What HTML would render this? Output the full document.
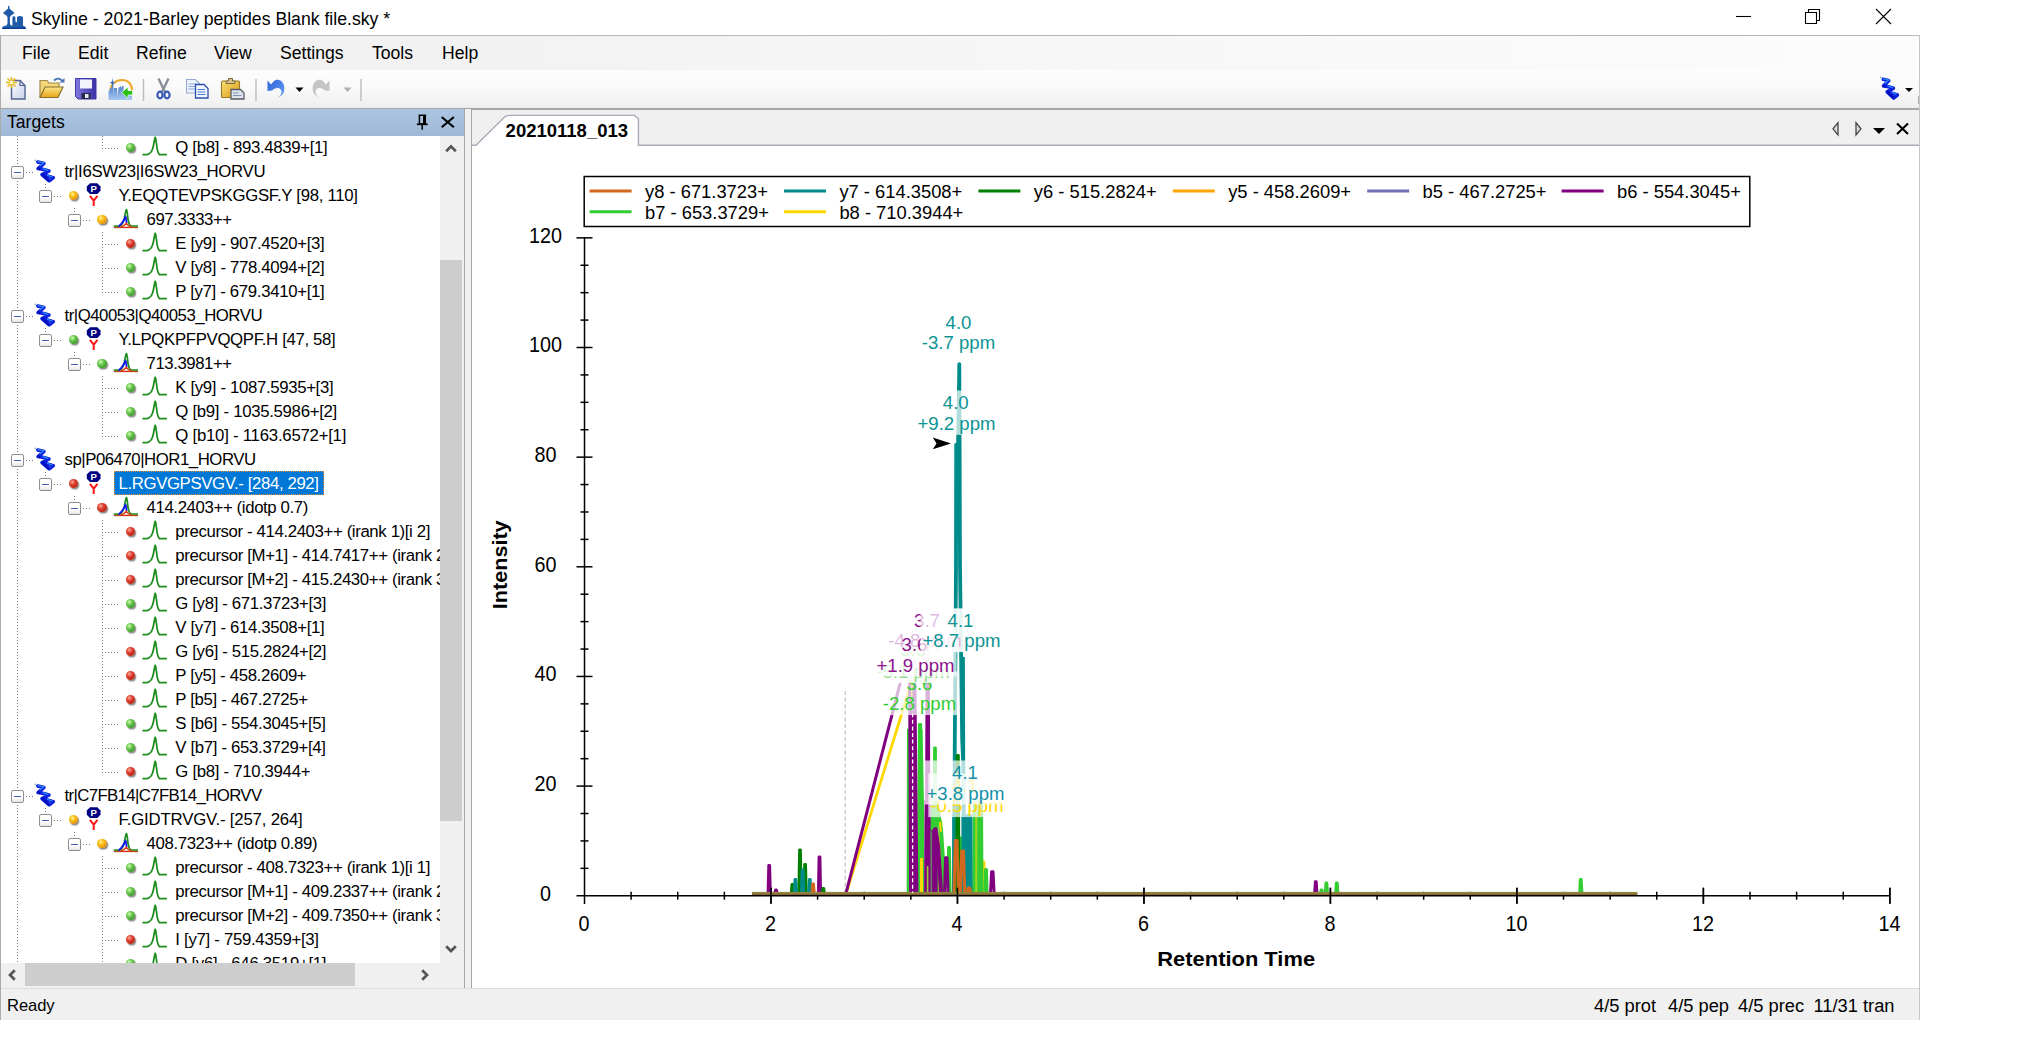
<!DOCTYPE html>
<html><head><meta charset="utf-8"><title>Skyline</title>
<style>
html,body{margin:0;padding:0;background:#fff;}
body{width:2024px;height:1064px;overflow:hidden;position:relative;font-family:"Liberation Sans",sans-serif;color:#000;}
.abs,#win *{position:absolute;}
#win{position:absolute;left:0;top:0;width:1920px;height:1020px;overflow:hidden;}
#title{left:0;top:0;width:1920px;height:35px;background:#fff;}
#title .t{left:31px;top:8px;font-size:17.66px;line-height:22px;white-space:nowrap;}
#topline{left:0;top:35px;width:1920px;height:1px;background:#b9b9b9;}
#lb{left:0;top:35px;width:1px;height:985px;background:#ababab;}
#rb{left:1919px;top:35px;width:1px;height:985px;background:#c6c6c6;}
#menu{left:1px;top:36px;width:1918px;height:34px;background:linear-gradient(90deg,#f0f0f0 0%,#f2f2f2 25%,#f7f7f7 58%,#fcfcfc 100%);}
#menu span{top:6px;font-size:17.6px;line-height:22px;white-space:nowrap;}
#tb{left:1px;top:70px;width:1918px;height:38px;background:linear-gradient(180deg,#fdfdfd 0%,#f9f9f9 50%,#eeeeee 100%);}
#tbline{left:1px;top:108.3px;width:1918px;height:1.4px;background:#a4a4a4;}
#dock{left:1px;top:109px;width:1918px;height:880px;background:#f0f0f0;}
/* targets pane */
#th{left:1px;top:109px;width:463px;height:26.7px;z-index:2;background:linear-gradient(180deg,#abc5e3,#9eb8d6);}
#th .t{left:6px;top:2px;font-size:17.6px;line-height:22px;}
#tree{left:1px;top:135px;width:439px;height:828px;background:#fff;overflow:hidden;}
#tree .tx{font-size:16.8px;line-height:20px;white-space:nowrap;padding:0 2px;letter-spacing:-0.3px}
#tree .tx.sel{background:#0078d7;color:#fff;outline:1px dotted #e08a3a;outline-offset:-1px;line-height:26px;height:24px;padding:0 5px 0 4.6px;}
.hd{height:1.3px;background-image:linear-gradient(90deg,#7c7c7c 0,#7c7c7c 1.25px,transparent 1.25px);background-size:3px 2px;}
.vd{width:1.25px;background-image:linear-gradient(180deg,#7c7c7c 0,#7c7c7c 1.25px,transparent 1.25px);background-size:2px 3px;}
.bx{width:10.6px;height:10.6px;border:1.2px solid #8f8f8f;background:linear-gradient(180deg,#fff 0%,#fff 55%,#e6e6e6 100%);border-radius:2px;}
.bx:after{content:"";position:absolute;left:1.6px;top:4.6px;width:7.4px;height:1.3px;background:#4660b0;}
.dot{width:9.8px;height:9.6px;border-radius:50%;box-shadow:1.2px 1.5px 1.3px rgba(40,30,20,.55);}
.dot.g{background:radial-gradient(circle at 37% 33%,#d8f9c0 0%,#74d058 30%,#44ac30 60%,#237e1a 88%,#1a6a14 100%);}
.dot.r{background:radial-gradient(circle at 37% 33%,#f8b0a0 0%,#e04434 32%,#c82a1a 62%,#96180c 88%,#7c1006 100%);}
.dot.o{background:radial-gradient(circle at 38% 34%,#fff4a8 0%,#fdc620 28%,#f2a40c 56%,#bc7606 86%,#9c5c04 100%);}
#vs{left:440px;top:135px;width:24px;height:828px;background:#f0f0f0;}
#vs .th{left:0;top:125px;width:22px;height:561px;background:#cdcdcd;}
#hs{left:1px;top:963px;width:439px;height:24px;background:#f0f0f0;}
#hs .th{left:24px;top:0;width:330px;height:23px;background:#cdcdcd;}
#corner{left:440px;top:963px;width:24px;height:24px;background:#f0f0f0;}
#split1{left:463.6px;top:109px;width:1.6px;height:879px;background:#a6a6a6;}
/* document pane */
#doc{left:471px;top:109px;width:1448px;height:879px;background:#fff;border-left:1.5px solid #a6a6a6;border-top:1.2px solid #a8a8a8;box-sizing:border-box;}
#tabs{left:472px;top:110px;width:1447px;height:35px;background:#f0f0f0;}
#tabline{display:none}
#botline{left:1px;top:988px;width:1918px;height:1px;background:#dcdcdc;}
#status{left:1px;top:989px;width:1918px;height:31px;background:#f0f0f0;}
#status span{top:6px;font-size:17.6px;line-height:22px;white-space:nowrap;}
svg.ic{overflow:visible}
</style></head><body>
<svg width="0" height="0" style="position:absolute">
<defs>
<g id="itran"><path d="M0.5 19.6 H5 C7 19.4 8 18 9 17 C10.5 15.5 11.5 11 12.2 6.5 C12.6 4 13 2.2 13.3 2.2 C13.7 2.2 14 5 14.5 9 C15 13 15.3 17.5 17.5 19.6 H24.8" fill="none" stroke="#1c8c1c" stroke-width="1.7" stroke-linejoin="round"/></g>
<g id="iprec"><path d="M0.8 20.4 H25" stroke="#c83c14" stroke-width="1.5"/><path d="M0.8 19 H6 C8 19 10 16 11 13 C11.8 10 12.6 2.4 13.4 2.4 C14.2 2.4 14.4 8 15 12 C15.6 16 16.5 19 18.5 19 H25" fill="none" stroke="#1c8c1c" stroke-width="1.7"/><path d="M5.5 19.6 C8 17.5 10 15 11.2 12.5 C11.8 11 12.3 9.5 12.6 9.5 C13 9.5 13.2 13 13.6 16" fill="none" stroke="#1818f0" stroke-width="1.8"/><path d="M7.5 20 C10 19.5 12 18 13.4 16.3 C14.6 18 16 19.5 18.5 20" fill="none" stroke="#e03c14" stroke-width="1.4"/></g>
<g id="ipep"><path d="M5 0.2 H12.3 L15.5 3.4 V7.8 L12.3 11 H5 L1.8 7.8 V3.4 Z" fill="#000082"/><text x="8.7" y="9.3" font-family="Liberation Sans,sans-serif" font-size="9.6" font-weight="bold" fill="#fff" text-anchor="middle">P</text><path d="M4.9 12.8 L8.7 17.6 L12.5 12.8 M8.7 17.4 V23" fill="none" stroke="#ff1414" stroke-width="2"/></g>
<g id="iprot"><circle cx="1.2" cy="1.2" r=".7" fill="#4a9aa8"/><path d="M3.8 3 L10 4.400 L4 9.600 L8.500 10.200 L15 12 L8 15.600 L13.200 16.800 L19.300 18.700 L15.200 21.800 L8 15.600" fill="none" stroke="#0a1ee0" stroke-width="3.500" stroke-linejoin="round" stroke-linecap="round"/><path d="M4.200 2.600 L9.600 3.800 L6 6.800 M9 9.900 L14 11.300 M13.500 16.400 L18 17.800" fill="none" stroke="#2a86f8" stroke-width="1.400" stroke-linecap="round"/><path d="M4.400 8.800 L5.500 10.500 M8.500 14.800 L10.500 17.500 L15 21.500" fill="none" stroke="#0008a0" stroke-width="1.300" stroke-linecap="round"/></g>
</defs></svg>
<div id="win">
<div id="title"><svg style="left:0;top:0" width="30" height="34" viewBox="0 0 30 34"><g fill="#1f5ba8"><path d="M8 6.200 Q8.700 5.500 9.400 6.200 V8.600 L14.200 12.800 Q14.400 13.900 13.200 13.900 Q10.400 15 9.900 17.200 V23.500 Q10.200 25.600 12.200 26 H5.200 Q7.300 25.600 7.500 23.500 V17.200 Q7 15 4.200 13.900 Q3 13.900 3.200 12.800 L8 8.600 Z"/><path d="M12.400 26.500 V17.600 Q12.400 16.300 13.900 16.300 Q15.400 16.300 15.400 17.600 V21.500 L16.300 22.600 L17 21.500 V17.600 Q17 16 20 16 Q23 16 23 17.600 V26.500 Z"/><path d="M2 28.900 Q2 26.300 4.600 25.700 H23.400 Q26 26.300 26 28.900 Z"/></g><path d="M2.200 28.300 H25.800" stroke="#0a3c90" stroke-width="1.200"/></svg><span class="t">Skyline - 2021-Barley peptides Blank file.sky *</span>
<svg style="left:1730px;top:4px" width="170" height="26" viewBox="0 0 170 26" fill="none" stroke="#000" stroke-width="1.1"><path d="M6 12.5 H21"/><path d="M75.5 8.5 h11 v11 h-11 z M78.5 8.5 v-3 h11 v11 h-3"/><path d="M146 5 l15 15 M161 5 l-15 15"/></svg>
</div>
<div id="topline"></div>
<div id="menu"><span style="left:21px">File</span><span style="left:77px">Edit</span><span style="left:135px">Refine</span><span style="left:213px">View</span><span style="left:279px">Settings</span><span style="left:371px">Tools</span><span style="left:441px">Help</span></div>
<div id="tb"><svg style="left:0;top:0" width="1918" height="38" viewBox="1 70 1918 38">
<defs>
<linearGradient id="gpg" x1="0" y1="0" x2="1" y2="1"><stop offset="0" stop-color="#ffffff"/><stop offset="1" stop-color="#c8d0e8"/></linearGradient>
<linearGradient id="gfo" x1="0" y1="0" x2="0" y2="1"><stop offset="0" stop-color="#fbe58a"/><stop offset="1" stop-color="#e9a416"/></linearGradient>
<linearGradient id="gfl" x1="0" y1="0" x2="1" y2="0"><stop offset="0" stop-color="#8078e0"/><stop offset="1" stop-color="#3a30a4"/></linearGradient>
<linearGradient id="gsk" x1="0" y1="0" x2="0" y2="1"><stop offset="0" stop-color="#1c56b0"/><stop offset="1" stop-color="#a8c8f4"/></linearGradient>
<linearGradient id="gcb" x1="0" y1="0" x2="1" y2="1"><stop offset="0" stop-color="#fbe07a"/><stop offset="1" stop-color="#d89a10"/></linearGradient>
<linearGradient id="gun" x1="0" y1="0" x2="1" y2="1"><stop offset="0" stop-color="#2a60d8"/><stop offset="1" stop-color="#6aa0f4"/></linearGradient>
</defs>
<!-- new -->
<path d="M11.5 80.5 H20 L25 85.5 V99 H11.5 Z" fill="url(#gpg)" stroke="#52648e" stroke-width="1.4"/>
<path d="M20 80.5 V85.5 H25" fill="none" stroke="#52648e" stroke-width="1.2"/>
<g stroke="#e8b818" stroke-width="1.6"><path d="M6 82.5 H17 M11.5 77 V88 M7.5 78.5 L15.5 86.5 M15.5 78.5 L7.5 86.5"/></g>
<rect x="9.8" y="80.8" width="3.4" height="3.4" fill="#fff8c0"/>
<!-- open -->
<path d="M40 97.5 V80.5 H47 L49 83 H59 V87" fill="#f4d878" stroke="#a08a50" stroke-width="1.2"/>
<path d="M40 97.5 L45 87 H63 L58 97.5 Z" fill="url(#gfo)" stroke="#8a7030" stroke-width="1.2"/>
<path d="M54 80.5 C57 77.5 61 78 62.5 82" fill="none" stroke="#4a74b4" stroke-width="1.8"/><path d="M59.5 82.5 H64.5 V78 Z" fill="#4a74b4"/>
<!-- save -->
<path d="M75.5 78.5 H96 V99 H78 L75.5 96.5 Z" fill="url(#gfl)" stroke="#4038a8" stroke-width="1"/>
<rect x="80" y="79.5" width="12" height="9" fill="#f4f4fc"/><rect x="81.5" y="93" width="9" height="6" fill="#2a2a48"/><rect x="85" y="94" width="3.5" height="4" fill="#e8e8f4"/>
<!-- skyline import -->
<path d="M110 93 C110 84 116 80 122 80 C128 80 132 84 132 90" fill="none" stroke="#f0a828" stroke-width="2"/>
<path d="M108.5 100 V92 L110.5 88 H111.5 L112 84 L110 82.5 L112 81.5 L112.5 78 L113 81.5 L115 82.5 L113.2 84 L114 96 V88 H117 V96 L118.5 88 L121 86 L122 89 V86 H123.5 V92 L132 96 V100 Z" fill="url(#gsk)"/>
<path d="M121.5 92.5 L128 87 V90.5 H132.5 V95 H128 V98.5 Z" fill="#28c010" stroke="#e8ffe0" stroke-width=".8"/>
<!-- sep -->
<path d="M143.5 79 V101 M256 79 V101 M361 79 V101" stroke="#bcbcbc" stroke-width="1.4"/>
<!-- cut -->
<path d="M158.5 78.5 L165 92 M168.5 78.5 L162 92" stroke="#8a8e98" stroke-width="2.4" fill="none"/>
<ellipse cx="160" cy="95" rx="2.6" ry="3.4" fill="none" stroke="#3858b8" stroke-width="2.2"/><ellipse cx="167" cy="95" rx="2.6" ry="3.4" fill="none" stroke="#3858b8" stroke-width="2.2"/>
<!-- copy -->
<path d="M186.5 79.5 H195.5 L199.5 83.5 V93 H186.5 Z" fill="#eef2fc" stroke="#98a8d0" stroke-width="1.1"/>
<path d="M188.5 84 H196 M188.5 86.5 H196 M188.5 89 H196" stroke="#88a4e0" stroke-width="1"/>
<path d="M195.5 84.5 H204 L208 88.5 V98 H195.5 Z" fill="#f4f8ff" stroke="#2c4cac" stroke-width="1.3"/>
<path d="M197.5 89.5 H205 M197.5 92 H205.5 M197.5 94.5 H205.5" stroke="#4878d8" stroke-width="1.1"/>
<!-- paste -->
<rect x="221.500" y="81" width="18" height="16.500" rx="1" fill="url(#gcb)" stroke="#9a7a28" stroke-width="1.1"/>
<path d="M226 83.500 V81 H228.500 V78.500 H232.500 V81 H235 V83.500 Z" fill="#d8c488" stroke="#7a6a40" stroke-width="1"/>
<path d="M231 89.500 H240.500 L244 93 V99 H231 Z" fill="#dde4f0" stroke="#5a5a60" stroke-width="1.3"/>
<path d="M233 93 H238.500 M233 95.500 H241.500" stroke="#8090a8" stroke-width="1"/>
<!-- undo -->
<path d="M272 90.500 C277 86 282 88 281.500 92.500 C281 95.500 279 97 277.500 97.500 C282.500 96.500 285.500 91.500 284 85.500 C282.500 80 277 78 273.500 81.500 L271 84.500 L267.500 80.500 V91 Z" fill="url(#gun)"/>
<path d="M295.500 87.500 H303.500 L299.500 92 Z" fill="#000"/>
<!-- redo -->
<path d="M325 90.500 C320 86 315 88 315.500 92.500 C316 95.500 318 97 319.500 97.500 C314.500 96.500 311.500 91.500 313 85.500 C314.500 80 320 78 323.500 81.500 L326 84.500 L329.500 80.500 V91 Z" fill="#c4c4c4"/>
<path d="M343.500 87.500 H351.500 L347.500 92 Z" fill="#b0b0b0"/>
<!-- right icon -->
<g transform="translate(1879.6,76.3) scale(0.93,1)"><use href="#iprot"/></g>
<path d="M1905 88 H1913 L1909 92 Z" fill="#000"/>
<path d="M1918.500 96 V104" stroke="#b0b0b0" stroke-width="1"/>
</svg>
</div>
<div id="tbline"></div>
<div id="dock"></div>
<div id="th"><span class="t">Targets</span>
<svg style="left:412px;top:4px" width="48" height="18" viewBox="0 0 48 18" fill="none" stroke="#000"><path d="M6.400 2.300 h5.900 v8.600 h-5.900 z" stroke-width="1.500"/><path d="M11.300 2.300 v8.600" stroke-width="2.600"/><path d="M3.800 11.300 h10.900" stroke-width="1.700"/><path d="M9.200 11.300 v5.400" stroke-width="1.500"/><path d="M28.700 4 l12.200 10.200 M40.900 4 l-12.200 10.200" stroke-width="2.100"/></svg></div>
<div id="tree">
<i class="vd" style="left:44.1px;top:48px;height:7px;background-position:0 1px"></i>
<i class="vd" style="left:72.7px;top:72px;height:7px;background-position:0 1px"></i>
<i class="vd" style="left:101.2px;top:96px;height:62px;background-position:0 1px"></i>
<i class="vd" style="left:44.1px;top:192px;height:7px;background-position:0 1px"></i>
<i class="vd" style="left:72.7px;top:216px;height:7px;background-position:0 1px"></i>
<i class="vd" style="left:101.2px;top:240px;height:62px;background-position:0 1px"></i>
<i class="vd" style="left:44.1px;top:336px;height:7px;background-position:0 1px"></i>
<i class="vd" style="left:72.7px;top:360px;height:7px;background-position:0 1px"></i>
<i class="vd" style="left:101.2px;top:384px;height:254px;background-position:0 1px"></i>
<i class="vd" style="left:44.1px;top:672px;height:7px;background-position:0 1px"></i>
<i class="vd" style="left:72.7px;top:696px;height:7px;background-position:0 1px"></i>
<i class="vd" style="left:101.2px;top:720px;height:120px;background-position:0 1px"></i>
<i class="vd" style="left:16.0px;top:0px;height:840px;background-position:0 1px"></i>
<i class="vd" style="left:101.2px;top:0px;height:14px;background-position:0 1px"></i>
<i class="hd" style="left:104px;top:12.8px;width:14px"></i><i class="dot g" style="left:124.7px;top:7.8px"></i><svg class="ic" style="left:141px;top:0px" width="26" height="24" viewBox="0 0 26 24"><use href="#itran"/></svg><span class="tx" style="left:172.3px;top:3px;letter-spacing:-0.33px">Q [b8] - 893.4839+[1]</span>
<i class="hd" style="left:25px;top:36.8px;width:8px"></i><i class="bx" style="left:10px;top:31px"></i><svg class="ic" style="left:33px;top:24px" width="22" height="24" viewBox="0 0 22 24"><use href="#iprot"/></svg><span class="tx" style="left:61.5px;top:27px;letter-spacing:-0.33px">tr|I6SW23|I6SW23_HORVU</span>
<i class="hd" style="left:53px;top:60.8px;width:8px"></i><i class="bx" style="left:38px;top:55px"></i><i class="dot o" style="left:67.6px;top:55.8px"></i><svg class="ic" style="left:84px;top:48px" width="20" height="24" viewBox="0 0 20 24"><use href="#ipep"/></svg><span class="tx" style="left:115.5px;top:51px;letter-spacing:-0.297px">Y.EQQTEVPSKGGSF.Y [98, 110]</span>
<i class="hd" style="left:82px;top:84.8px;width:8px"></i><i class="bx" style="left:67px;top:79px"></i><i class="dot o" style="left:96.2px;top:79.8px"></i><svg class="ic" style="left:112px;top:72px" width="26" height="24" viewBox="0 0 26 24"><use href="#iprec"/></svg><span class="tx" style="left:143.5px;top:75px;letter-spacing:-0.442px">697.3333++</span>
<i class="hd" style="left:104px;top:108.8px;width:14px"></i><i class="dot r" style="left:124.7px;top:103.8px"></i><svg class="ic" style="left:141px;top:96px" width="26" height="24" viewBox="0 0 26 24"><use href="#itran"/></svg><span class="tx" style="left:172.3px;top:99px;letter-spacing:-0.345px">E [y9] - 907.4520+[3]</span>
<i class="hd" style="left:104px;top:132.8px;width:14px"></i><i class="dot g" style="left:124.7px;top:127.8px"></i><svg class="ic" style="left:141px;top:120px" width="26" height="24" viewBox="0 0 26 24"><use href="#itran"/></svg><span class="tx" style="left:172.3px;top:123px;letter-spacing:-0.345px">V [y8] - 778.4094+[2]</span>
<i class="hd" style="left:104px;top:156.8px;width:14px"></i><i class="dot g" style="left:124.7px;top:151.8px"></i><svg class="ic" style="left:141px;top:144px" width="26" height="24" viewBox="0 0 26 24"><use href="#itran"/></svg><span class="tx" style="left:172.3px;top:147px;letter-spacing:-0.33px">P [y7] - 679.3410+[1]</span>
<i class="hd" style="left:25px;top:180.8px;width:8px"></i><i class="bx" style="left:10px;top:175px"></i><svg class="ic" style="left:33px;top:168px" width="22" height="24" viewBox="0 0 22 24"><use href="#iprot"/></svg><span class="tx" style="left:61.5px;top:171px;letter-spacing:-0.477px">tr|Q40053|Q40053_HORVU</span>
<i class="hd" style="left:53px;top:204.8px;width:8px"></i><i class="bx" style="left:38px;top:199px"></i><i class="dot g" style="left:67.6px;top:199.8px"></i><svg class="ic" style="left:84px;top:192px" width="20" height="24" viewBox="0 0 20 24"><use href="#ipep"/></svg><span class="tx" style="left:115.5px;top:195px;letter-spacing:-0.341px">Y.LPQKPFPVQQPF.H [47, 58]</span>
<i class="hd" style="left:82px;top:228.8px;width:8px"></i><i class="bx" style="left:67px;top:223px"></i><i class="dot g" style="left:96.2px;top:223.8px"></i><svg class="ic" style="left:112px;top:216px" width="26" height="24" viewBox="0 0 26 24"><use href="#iprec"/></svg><span class="tx" style="left:143.5px;top:219px;letter-spacing:-0.442px">713.3981++</span>
<i class="hd" style="left:104px;top:252.8px;width:14px"></i><i class="dot g" style="left:124.7px;top:247.8px"></i><svg class="ic" style="left:141px;top:240px" width="26" height="24" viewBox="0 0 26 24"><use href="#itran"/></svg><span class="tx" style="left:172.3px;top:243px;letter-spacing:-0.349px">K [y9] - 1087.5935+[3]</span>
<i class="hd" style="left:104px;top:276.8px;width:14px"></i><i class="dot g" style="left:124.7px;top:271.8px"></i><svg class="ic" style="left:141px;top:264px" width="26" height="24" viewBox="0 0 26 24"><use href="#itran"/></svg><span class="tx" style="left:172.3px;top:267px;letter-spacing:-0.31px">Q [b9] - 1035.5986+[2]</span>
<i class="hd" style="left:104px;top:300.8px;width:14px"></i><i class="dot g" style="left:124.7px;top:295.8px"></i><svg class="ic" style="left:141px;top:288px" width="26" height="24" viewBox="0 0 26 24"><use href="#itran"/></svg><span class="tx" style="left:172.3px;top:291px;letter-spacing:-0.247px">Q [b10] - 1163.6572+[1]</span>
<i class="hd" style="left:25px;top:324.8px;width:8px"></i><i class="bx" style="left:10px;top:319px"></i><svg class="ic" style="left:33px;top:312px" width="22" height="24" viewBox="0 0 22 24"><use href="#iprot"/></svg><span class="tx" style="left:61.5px;top:315px;letter-spacing:-0.473px">sp|P06470|HOR1_HORVU</span>
<i class="hd" style="left:53px;top:348.8px;width:8px"></i><i class="bx" style="left:38px;top:343px"></i><i class="dot r" style="left:67.6px;top:343.8px"></i><svg class="ic" style="left:84px;top:336px" width="20" height="24" viewBox="0 0 20 24"><use href="#ipep"/></svg><span class="tx sel" style="left:112.9px;top:336px;letter-spacing:-0.381px">L.RGVGPSVGV.- [284, 292]</span>
<i class="hd" style="left:82px;top:372.8px;width:8px"></i><i class="bx" style="left:67px;top:367px"></i><i class="dot r" style="left:96.2px;top:367.8px"></i><svg class="ic" style="left:112px;top:360px" width="26" height="24" viewBox="0 0 26 24"><use href="#iprec"/></svg><span class="tx" style="left:143.5px;top:363px;letter-spacing:-0.377px">414.2403++ (idotp 0.7)</span>
<i class="hd" style="left:104px;top:396.8px;width:14px"></i><i class="dot r" style="left:124.7px;top:391.8px"></i><svg class="ic" style="left:141px;top:384px" width="26" height="24" viewBox="0 0 26 24"><use href="#itran"/></svg><span class="tx" style="left:172.3px;top:387px;letter-spacing:-0.378px">precursor - 414.2403++ (irank 1)[i 2]</span>
<i class="hd" style="left:104px;top:420.8px;width:14px"></i><i class="dot r" style="left:124.7px;top:415.8px"></i><svg class="ic" style="left:141px;top:408px" width="26" height="24" viewBox="0 0 26 24"><use href="#itran"/></svg><span class="tx" style="left:172.3px;top:411px;letter-spacing:-0.36px">precursor [M+1] - 414.7417++ (irank 2)[i 3]</span>
<i class="hd" style="left:104px;top:444.8px;width:14px"></i><i class="dot r" style="left:124.7px;top:439.8px"></i><svg class="ic" style="left:141px;top:432px" width="26" height="24" viewBox="0 0 26 24"><use href="#itran"/></svg><span class="tx" style="left:172.3px;top:435px;letter-spacing:-0.36px">precursor [M+2] - 415.2430++ (irank 3)[i 4]</span>
<i class="hd" style="left:104px;top:468.8px;width:14px"></i><i class="dot g" style="left:124.7px;top:463.8px"></i><svg class="ic" style="left:141px;top:456px" width="26" height="24" viewBox="0 0 26 24"><use href="#itran"/></svg><span class="tx" style="left:172.3px;top:459px;letter-spacing:-0.35px">G [y8] - 671.3723+[3]</span>
<i class="hd" style="left:104px;top:492.8px;width:14px"></i><i class="dot g" style="left:124.7px;top:487.8px"></i><svg class="ic" style="left:141px;top:480px" width="26" height="24" viewBox="0 0 26 24"><use href="#itran"/></svg><span class="tx" style="left:172.3px;top:483px;letter-spacing:-0.345px">V [y7] - 614.3508+[1]</span>
<i class="hd" style="left:104px;top:516.8px;width:14px"></i><i class="dot r" style="left:124.7px;top:511.8px"></i><svg class="ic" style="left:141px;top:504px" width="26" height="24" viewBox="0 0 26 24"><use href="#itran"/></svg><span class="tx" style="left:172.3px;top:507px;letter-spacing:-0.35px">G [y6] - 515.2824+[2]</span>
<i class="hd" style="left:104px;top:540.8px;width:14px"></i><i class="dot r" style="left:124.7px;top:535.8px"></i><svg class="ic" style="left:141px;top:528px" width="26" height="24" viewBox="0 0 26 24"><use href="#itran"/></svg><span class="tx" style="left:172.3px;top:531px;letter-spacing:-0.349px">P [y5] - 458.2609+</span>
<i class="hd" style="left:104px;top:564.8px;width:14px"></i><i class="dot r" style="left:124.7px;top:559.8px"></i><svg class="ic" style="left:141px;top:552px" width="26" height="24" viewBox="0 0 26 24"><use href="#itran"/></svg><span class="tx" style="left:172.3px;top:555px;letter-spacing:-0.326px">P [b5] - 467.2725+</span>
<i class="hd" style="left:104px;top:588.8px;width:14px"></i><i class="dot g" style="left:124.7px;top:583.8px"></i><svg class="ic" style="left:141px;top:576px" width="26" height="24" viewBox="0 0 26 24"><use href="#itran"/></svg><span class="tx" style="left:172.3px;top:579px;letter-spacing:-0.33px">S [b6] - 554.3045+[5]</span>
<i class="hd" style="left:104px;top:612.8px;width:14px"></i><i class="dot g" style="left:124.7px;top:607.8px"></i><svg class="ic" style="left:141px;top:600px" width="26" height="24" viewBox="0 0 26 24"><use href="#itran"/></svg><span class="tx" style="left:172.3px;top:603px;letter-spacing:-0.33px">V [b7] - 653.3729+[4]</span>
<i class="hd" style="left:104px;top:636.8px;width:14px"></i><i class="dot r" style="left:124.7px;top:631.8px"></i><svg class="ic" style="left:141px;top:624px" width="26" height="24" viewBox="0 0 26 24"><use href="#itran"/></svg><span class="tx" style="left:172.3px;top:627px;letter-spacing:-0.308px">G [b8] - 710.3944+</span>
<i class="hd" style="left:25px;top:660.8px;width:8px"></i><i class="bx" style="left:10px;top:655px"></i><svg class="ic" style="left:33px;top:648px" width="22" height="24" viewBox="0 0 22 24"><use href="#iprot"/></svg><span class="tx" style="left:61.5px;top:651px;letter-spacing:-0.63px">tr|C7FB14|C7FB14_HORVV</span>
<i class="hd" style="left:53px;top:684.8px;width:8px"></i><i class="bx" style="left:38px;top:679px"></i><i class="dot o" style="left:67.6px;top:679.8px"></i><svg class="ic" style="left:84px;top:672px" width="20" height="24" viewBox="0 0 20 24"><use href="#ipep"/></svg><span class="tx" style="left:115.5px;top:675px;letter-spacing:-0.188px">F.GIDTRVGV.- [257, 264]</span>
<i class="hd" style="left:82px;top:708.8px;width:8px"></i><i class="bx" style="left:67px;top:703px"></i><i class="dot o" style="left:96.2px;top:703.8px"></i><svg class="ic" style="left:112px;top:696px" width="26" height="24" viewBox="0 0 26 24"><use href="#iprec"/></svg><span class="tx" style="left:143.5px;top:699px;letter-spacing:-0.37px">408.7323++ (idotp 0.89)</span>
<i class="hd" style="left:104px;top:732.8px;width:14px"></i><i class="dot g" style="left:124.7px;top:727.8px"></i><svg class="ic" style="left:141px;top:720px" width="26" height="24" viewBox="0 0 26 24"><use href="#itran"/></svg><span class="tx" style="left:172.3px;top:723px;letter-spacing:-0.378px">precursor - 408.7323++ (irank 1)[i 1]</span>
<i class="hd" style="left:104px;top:756.8px;width:14px"></i><i class="dot g" style="left:124.7px;top:751.8px"></i><svg class="ic" style="left:141px;top:744px" width="26" height="24" viewBox="0 0 26 24"><use href="#itran"/></svg><span class="tx" style="left:172.3px;top:747px;letter-spacing:-0.36px">precursor [M+1] - 409.2337++ (irank 2)[i 2]</span>
<i class="hd" style="left:104px;top:780.8px;width:14px"></i><i class="dot g" style="left:124.7px;top:775.8px"></i><svg class="ic" style="left:141px;top:768px" width="26" height="24" viewBox="0 0 26 24"><use href="#itran"/></svg><span class="tx" style="left:172.3px;top:771px;letter-spacing:-0.36px">precursor [M+2] - 409.7350++ (irank 3)[i 3]</span>
<i class="hd" style="left:104px;top:804.8px;width:14px"></i><i class="dot r" style="left:124.7px;top:799.8px"></i><svg class="ic" style="left:141px;top:792px" width="26" height="24" viewBox="0 0 26 24"><use href="#itran"/></svg><span class="tx" style="left:172.3px;top:795px;letter-spacing:-0.3px">I [y7] - 759.4359+[3]</span>
<i class="hd" style="left:104px;top:828.8px;width:14px"></i><i class="dot g" style="left:124.7px;top:823.8px"></i><svg class="ic" style="left:141px;top:816px" width="26" height="24" viewBox="0 0 26 24"><use href="#itran"/></svg><span class="tx" style="left:172.3px;top:819px;letter-spacing:-0.3px">D [y6] - 646.3519+[1]</span>
</div>
<div id="vs"><div class="th"></div>
<svg style="left:4px;top:8px" width="14" height="10" viewBox="0 0 14 10"><path d="M2.2 8.2 L7 3.4 L11.8 8.2" fill="none" stroke="#555" stroke-width="2.7"/></svg>
<svg style="left:4px;top:809px" width="14" height="10" viewBox="0 0 14 10"><path d="M2.2 2.2 L7 7 L11.8 2.2" fill="none" stroke="#555" stroke-width="2.7"/></svg>
</div>
<div id="hs"><div class="th"></div>
<svg style="left:6px;top:5px" width="10" height="14" viewBox="0 0 10 14"><path d="M7.8 2.2 L3 7 L7.8 11.8" fill="none" stroke="#555" stroke-width="2.7"/></svg>
<svg style="left:419px;top:5px" width="10" height="14" viewBox="0 0 10 14"><path d="M2.2 2.2 L7 7 L2.2 11.8" fill="none" stroke="#555" stroke-width="2.7"/></svg>
</div>
<div id="corner"></div>
<div id="split1"></div>
<div id="doc"></div>
<div id="tabs">
<svg style="left:0;top:0" width="1447" height="36" viewBox="0 0 1447 36"><path d="M0 35.3 H4 L32 7.4 Q34.5 5.4 37.5 5.4 H162.6 L166.4 8.8 V35.3 H1447 V37 H0 Z" fill="#fff"/><path d="M0 35.3 H4 L32 7.4 Q34.5 5.4 37.5 5.4 H162.6 L166.4 8.8 V35.3 H1447" fill="none" stroke="#a9adb9" stroke-width="1.4"/>
<text x="33.6" y="26.7" font-family="Liberation Sans,sans-serif" font-weight="bold" font-size="18.5" fill="#000">20210118_013</text>
<g transform="translate(1353,9.5)"><path d="M13 3.2 L8 9.3 L13 15.400 Z" fill="#ddd" stroke="#444" stroke-width="1.300"/><path d="M31 3.200 L36 9.300 L31 15.400 Z" fill="#ddd" stroke="#444" stroke-width="1.300"/><path d="M48 8.500 H60 L54 14.500 Z" fill="#000"/><path d="M72 4 l11 10.600 M83 4 l-11 10.600" stroke="#000" stroke-width="2.100"/></g>
</svg>
</div>
<div id="chart" style="left:472px;top:146px;width:1447px;height:842px;">
<svg style="left:0;top:0" width="1447" height="842" viewBox="472 146 1447 842">
<rect x="472" y="146" width="1447" height="842" fill="#fff"/>
<rect x="584.2" y="176.5" width="1165.6" height="50" fill="#fff" stroke="#000" stroke-width="1.5"/>
<line x1="589.6" y1="191.0" x2="631.6" y2="191.0" stroke="#d2691e" stroke-width="3"/>
<text x="645.0" y="198.4" font-family="Liberation Sans,Arial,sans-serif" font-size="18.35" fill="#000">y8 - 671.3723+</text>
<line x1="784.0" y1="191.0" x2="826.0" y2="191.0" stroke="#008b8b" stroke-width="3"/>
<text x="839.4" y="198.4" font-family="Liberation Sans,Arial,sans-serif" font-size="18.35" fill="#000">y7 - 614.3508+</text>
<line x1="978.4" y1="191.0" x2="1020.4" y2="191.0" stroke="#008000" stroke-width="3"/>
<text x="1033.8" y="198.4" font-family="Liberation Sans,Arial,sans-serif" font-size="18.35" fill="#000">y6 - 515.2824+</text>
<line x1="1172.8" y1="191.0" x2="1214.8" y2="191.0" stroke="#ffa500" stroke-width="3"/>
<text x="1228.2" y="198.4" font-family="Liberation Sans,Arial,sans-serif" font-size="18.35" fill="#000">y5 - 458.2609+</text>
<line x1="1367.2" y1="191.0" x2="1409.2" y2="191.0" stroke="#7570b3" stroke-width="3"/>
<text x="1422.6" y="198.4" font-family="Liberation Sans,Arial,sans-serif" font-size="18.35" fill="#000">b5 - 467.2725+</text>
<line x1="1561.6" y1="191.0" x2="1603.6" y2="191.0" stroke="#800080" stroke-width="3"/>
<text x="1617.0" y="198.4" font-family="Liberation Sans,Arial,sans-serif" font-size="18.35" fill="#000">b6 - 554.3045+</text>
<line x1="589.6" y1="211.7" x2="631.6" y2="211.7" stroke="#32cd32" stroke-width="3"/>
<text x="645.0" y="219.4" font-family="Liberation Sans,Arial,sans-serif" font-size="18.35" fill="#000">b7 - 653.3729+</text>
<line x1="784.0" y1="211.7" x2="826.0" y2="211.7" stroke="#ffd700" stroke-width="3"/>
<text x="839.4" y="219.4" font-family="Liberation Sans,Arial,sans-serif" font-size="18.35" fill="#000">b8 - 710.3944+</text>
<g stroke="#000" stroke-width="1.5" fill="none"><path d="M584.5 237 V904" /><path d="M576.5 895.75 H1889.5" /><path d="M580.5 868.34 H588.5"/><path d="M580.5 840.92 H588.5"/><path d="M580.5 813.51 H588.5"/><path d="M576.5 786.10 H592.5"/><path d="M580.5 758.69 H588.5"/><path d="M580.5 731.27 H588.5"/><path d="M580.5 703.86 H588.5"/><path d="M576.5 676.45 H592.5"/><path d="M580.5 649.04 H588.5"/><path d="M580.5 621.62 H588.5"/><path d="M580.5 594.21 H588.5"/><path d="M576.5 566.80 H592.5"/><path d="M580.5 539.39 H588.5"/><path d="M580.5 511.98 H588.5"/><path d="M580.5 484.56 H588.5"/><path d="M576.5 457.15 H592.5"/><path d="M580.5 429.74 H588.5"/><path d="M580.5 402.32 H588.5"/><path d="M580.5 374.91 H588.5"/><path d="M576.5 347.50 H592.5"/><path d="M580.5 320.09 H588.5"/><path d="M580.5 292.67 H588.5"/><path d="M580.5 265.26 H588.5"/><path d="M576.5 237.85 H592.5"/><path d="M631.12 891.75 V899.75"/><path d="M677.74 891.75 V899.75"/><path d="M724.36 891.75 V899.75"/><path d="M770.98 887.75 V903.75"/><path d="M817.60 891.75 V899.75"/><path d="M864.22 891.75 V899.75"/><path d="M910.84 891.75 V899.75"/><path d="M957.46 887.75 V903.75"/><path d="M1004.08 891.75 V899.75"/><path d="M1050.70 891.75 V899.75"/><path d="M1097.32 891.75 V899.75"/><path d="M1143.94 887.75 V903.75"/><path d="M1190.56 891.75 V899.75"/><path d="M1237.18 891.75 V899.75"/><path d="M1283.80 891.75 V899.75"/><path d="M1330.42 887.75 V903.75"/><path d="M1377.04 891.75 V899.75"/><path d="M1423.66 891.75 V899.75"/><path d="M1470.28 891.75 V899.75"/><path d="M1516.90 887.75 V903.75"/><path d="M1563.52 891.75 V899.75"/><path d="M1610.14 891.75 V899.75"/><path d="M1656.76 891.75 V899.75"/><path d="M1703.38 887.75 V903.75"/><path d="M1750.00 891.75 V899.75"/><path d="M1796.62 891.75 V899.75"/><path d="M1843.24 891.75 V899.75"/><path d="M1889.86 887.75 V903.75"/></g>
<clipPath id="cp"><rect x="585.5" y="146" width="1340" height="748.7"/></clipPath><g clip-path="url(#cp)">
<path d="M845.2 691 V893" stroke="#c4c4c4" stroke-width="1.3" stroke-dasharray="4 2.6" fill="none"/>
<path d="M846.3 893.2 L911.5 682.0 L913.0 893.2" fill="none" stroke="#ffd700" stroke-width="2.8" stroke-linejoin="round" stroke-linecap="round" />
<path d="M920.4 893.2 L921.1 857 L921.9 857 L922.6 893.2 M939.4 893.2 L940.1 822 L940.9 822 L941.6 893.2 M982.4 893.2 L983.1 862 L983.9 862 L984.6 893.2 " fill="none" stroke="#ffd700" stroke-width="3.0" stroke-linejoin="round" stroke-linecap="round"/>
<path d="M908.3 893.2 L908.6 730.0" fill="none" stroke="#32cd32" stroke-width="3.3" stroke-linejoin="round" stroke-linecap="round" />
<path d="M918.4 893.2 L919.4 724.5 L920.6 724.5 L921.6 893.2 " fill="none" stroke="#32cd32" stroke-width="3.0" stroke-linejoin="round" stroke-linecap="round"/>
<path d="M933.9 893.2 L934.6 748 L935.4 748 L936.1 893.2 " fill="none" stroke="#32cd32" stroke-width="3.0" stroke-linejoin="round" stroke-linecap="round"/>
<path d="M920.3 730.0 L922.0 822.0 L922.0 893.2" fill="none" stroke="#32cd32" stroke-width="4.6" stroke-linejoin="round" stroke-linecap="round" />
<path d="M930.0 893.2 L931.0 835.0 L934.0 800.0 L937.0 805.0 L941.0 830.0 L943.0 860.0 L944.0 893.2" fill="none" stroke="#32cd32" stroke-width="4" stroke-linejoin="round" stroke-linecap="round" />
<path d="M936.0 893.2 L936.0 810.0" fill="none" stroke="#32cd32" stroke-width="5" stroke-linejoin="round" stroke-linecap="round" />
<path d="M947.9 893.2 L948.6 847.5 L949.4 847.5 L950.1 893.2 M959.9 893.2 L960.6 838 L961.4 838 L962.1 893.2 M984.9 893.2 L985.6 869.5 L986.4 869.5 L987.1 893.2 " fill="none" stroke="#32cd32" stroke-width="3.0" stroke-linejoin="round" stroke-linecap="round"/>
<path d="M974.0 893.2 L975.0 800.0 L981.0 800.0 L981.5 893.2" fill="none" stroke="#32cd32" stroke-width="4" stroke-linejoin="round" stroke-linecap="round" />
<path d="M978.0 893.2 L978.0 800.0" fill="none" stroke="#32cd32" stroke-width="5" stroke-linejoin="round" stroke-linecap="round" />
<path d="M1320.4 893.2 L1321.1 890 L1321.9 890 L1322.6 893.2 M1325.3 893.2 L1326.0 883 L1326.8 883 L1327.5 893.2 M1335.7 893.2 L1336.4 883 L1337.2 883 L1337.9 893.2 M1579.7 893.2 L1580.4 879.5 L1581.2 879.5 L1581.9 893.2 " fill="none" stroke="#32cd32" stroke-width="3.0" stroke-linejoin="round" stroke-linecap="round"/>
<path d="M768.1 893.2 L768.8 865.5 L769.6 865.5 L770.3 893.2 M774.9 893.2 L775.6 890 L776.4 890 L777.1 893.2 M818.4 893.2 L819.1 857 L819.9 857 L820.6 893.2 " fill="none" stroke="#800080" stroke-width="3.0" stroke-linejoin="round" stroke-linecap="round"/>
<path d="M846.0 893.2 L909.5 647.0 L910.6 893.2" fill="none" stroke="#800080" stroke-width="3.0" stroke-linejoin="round" stroke-linecap="round" />
<path d="M913.0 893.2 L914.4 660.0 L916.6 893.2" fill="none" stroke="#800080" stroke-width="3.6" stroke-linejoin="round" stroke-linecap="round" />
<path d="M912.5 893.2 L912.5 700.0" fill="none" stroke="#800080" stroke-width="5" stroke-linejoin="round" stroke-linecap="round" />
<path d="M926.3 893.2 L927.1 655 L928.3 655 L929.1 893.2 " fill="none" stroke="#800080" stroke-width="3.0" stroke-linejoin="round" stroke-linecap="round"/>
<path d="M927.6 800.0 L927.1 893.2" fill="none" stroke="#800080" stroke-width="6" stroke-linejoin="round" stroke-linecap="butt" />
<path d="M927.6 866.0 L927.6 893.2" fill="none" stroke="#9acd32" stroke-width="1.6" stroke-linejoin="round" stroke-linecap="butt" />
<path d="M931.5 893.2 L933.0 832.0 L935.5 829.0 L938.0 845.0 L940.0 875.0 L941.0 893.2" fill="none" stroke="#800080" stroke-width="4" stroke-linejoin="round" stroke-linecap="round" />
<path d="M935.0 893.2 L935.5 840.0" fill="none" stroke="#800080" stroke-width="5" stroke-linejoin="round" stroke-linecap="round" />
<path d="M944.5 893.2 L945.6 857.7 L947.0 857.7 L948.1 893.2 M990.5 893.2 L991.6 871.7 L993.0 871.7 L994.1 893.2 " fill="none" stroke="#800080" stroke-width="3.0" stroke-linejoin="round" stroke-linecap="round"/>
<path d="M1314.7 893.2 L1315.4 881.7 L1316.2 881.7 L1316.9 893.2 " fill="none" stroke="#800080" stroke-width="3.0" stroke-linejoin="round" stroke-linecap="round"/>
<path d="M921.5 858.0 L921.5 893.2" fill="none" stroke="#ffd700" stroke-width="3" stroke-linejoin="round" stroke-linecap="butt" />
<path d="M940.0 823.0 L940.8 831.0" fill="none" stroke="#ffd700" stroke-width="2.2" stroke-linejoin="round" stroke-linecap="round" />
<path d="M931.3 893.2 L931.3 832.0" fill="none" stroke="#6a7a68" stroke-width="1.6" stroke-linejoin="round" stroke-linecap="round" />
<path d="M791.3 893.2 L792.0 884.5 L792.8 884.5 L793.5 893.2 M798.9 893.2 L799.6 850 L800.4 850 L801.1 893.2 M804.0 893.2 L804.7 864.5 L805.5 864.5 L806.2 893.2 M822.2 893.2 L822.9 888.5 L823.7 888.5 L824.4 893.2 " fill="none" stroke="#008000" stroke-width="3.0" stroke-linejoin="round" stroke-linecap="round"/>
<path d="M794.3 893.2 L795.0 879.5 L795.8 879.5 L796.5 893.2 M801.5 893.2 L802.2 870 L803.0 870 L803.7 893.2 M808.7 893.2 L809.4 879.5 L810.2 879.5 L810.9 893.2 " fill="none" stroke="#008b8b" stroke-width="3.0" stroke-linejoin="round" stroke-linecap="round"/>
<path d="M953.8 893.2 L954.1 870.0 L954.8 740.0 L956.0 567.0 L956.2 444.7 L957.7 470.0 L959.3 364.1 L959.6 444.0 L960.0 567.0 L962.2 740.0 L963.3 765.0 L964.2 893.2" fill="none" stroke="#008b8b" stroke-width="3.8" stroke-linejoin="round" stroke-linecap="round" />
<path d="M963.2 893.2 L963.6 658.0 L964.2 893.2" fill="none" stroke="#008b8b" stroke-width="2.6" stroke-linejoin="round" stroke-linecap="round" />
<path d="M955.0 893.2 L955.0 814.0" fill="none" stroke="#008b8b" stroke-width="5.4" stroke-linejoin="round" stroke-linecap="butt" />
<path d="M967.0 893.2 L967.0 814.0" fill="none" stroke="#008b8b" stroke-width="11" stroke-linejoin="round" stroke-linecap="butt" />
<path d="M956.6 893.2 L957.3 755.6 L958.3 755.6 L959.0 893.2 " fill="none" stroke="#008000" stroke-width="3.0" stroke-linejoin="round" stroke-linecap="round"/>
<path d="M976.3 893.2 L976.3 800.0" fill="none" stroke="#a4d020" stroke-width="2" stroke-linejoin="round" stroke-linecap="round" />
<path d="M812.0 893.2 L812.7 884 L813.5 884 L814.2 893.2 " fill="none" stroke="#d2691e" stroke-width="3.0" stroke-linejoin="round" stroke-linecap="round"/>
<path d="M954.0 893.2 L955.3 840.6 L957.1 840.6 L958.4 893.2 M960.4 893.2 L961.7 851 L963.5 851 L964.8 893.2 " fill="none" stroke="#d2691e" stroke-width="3.0" stroke-linejoin="round" stroke-linecap="round"/>
<path d="M967.0 893.2 L968.2 888 L969.8 888 L971.0 893.2 " fill="none" stroke="#d2691e" stroke-width="3.0" stroke-linejoin="round" stroke-linecap="round"/>
</g>
<path d="M752 892.5 H1637.5" stroke="#8c8648" stroke-width="1"/>
<path d="M752 893.5 H1637.5" stroke="#90783a" stroke-width="1"/>
<path d="M752 894.5 H1637.5" stroke="#8a662a" stroke-width="1"/>
<path d="M752 891.5 H1637.5" stroke="#8c8648" stroke-opacity="0.12" stroke-width="1"/>
<path d="M912.6 700 V893" stroke="#fff" stroke-width="1.3" stroke-dasharray="4 2.6" fill="none"/>
<rect x="928.3" y="773.5" width="77.4" height="43.6" fill="#fff" fill-opacity="0.7"/>
<text font-family="Liberation Sans,Arial,sans-serif" font-size="18.6" fill="#ffd700" text-anchor="middle"><tspan x="965" y="791.6">4.1</tspan><tspan x="967" y="812.2">-0.5 ppm</tspan></text>
<rect x="880.8" y="671.5" width="77.4" height="43.6" fill="#fff" fill-opacity="0.7"/>
<text font-family="Liberation Sans,Arial,sans-serif" font-size="18.6" fill="#32cd32" text-anchor="middle"><tspan x="919.5" y="689.6">3.6</tspan><tspan x="919.5" y="710.2">-2.8 ppm</tspan></text>
<rect x="874.3" y="638.5" width="77.4" height="44.5" fill="#fff" fill-opacity="0.7"/>
<text font-family="Liberation Sans,Arial,sans-serif" font-size="18.6" fill="#ffe680" text-anchor="middle"><tspan x="913" y="656.6">3.6</tspan><tspan x="913" y="678.1">-5.1 ppm</tspan></text>
<rect x="874.3" y="638.0" width="77.4" height="44.5" fill="#fff" fill-opacity="0.7"/>
<text font-family="Liberation Sans,Arial,sans-serif" font-size="18.6" fill="#8cdc8c" text-anchor="middle"><tspan x="913" y="656.1">3.6</tspan><tspan x="913" y="677.6">-5.1 ppm</tspan></text>
<rect x="886.3" y="608.5" width="77.4" height="43.6" fill="#fff" fill-opacity="0.7"/>
<text font-family="Liberation Sans,Arial,sans-serif" font-size="18.6" fill="#8c148c" text-anchor="middle"><tspan x="927" y="626.6">3.7</tspan><tspan x="925" y="647.2">-4.8 ppm</tspan></text>
<rect x="874.5" y="632.5" width="82.1" height="44.0" fill="#fff" fill-opacity="0.7"/>
<text font-family="Liberation Sans,Arial,sans-serif" font-size="18.6" fill="#8c148c" text-anchor="middle"><tspan x="914.5" y="650.6">3.6</tspan><tspan x="915.5" y="671.6">+1.9 ppm</tspan></text>
<rect x="919.8" y="310.5" width="77.4" height="43.6" fill="#fff" fill-opacity="0.7"/>
<text font-family="Liberation Sans,Arial,sans-serif" font-size="18.6" fill="#0c9494" text-anchor="middle"><tspan x="958.5" y="328.6">4.0</tspan><tspan x="958.5" y="349.2">-3.7 ppm</tspan></text>
<rect x="915.5" y="390.5" width="82.1" height="44.4" fill="#fff" fill-opacity="0.7"/>
<text font-family="Liberation Sans,Arial,sans-serif" font-size="18.6" fill="#0c9494" text-anchor="middle"><tspan x="955.8" y="408.6">4.0</tspan><tspan x="956.5" y="430.0">+9.2 ppm</tspan></text>
<rect x="920.5" y="608.5" width="82.1" height="43.4" fill="#fff" fill-opacity="0.7"/>
<text font-family="Liberation Sans,Arial,sans-serif" font-size="18.6" fill="#0c9494" text-anchor="middle"><tspan x="960.5" y="626.6">4.1</tspan><tspan x="961.5" y="647.0">+8.7 ppm</tspan></text>
<rect x="924.5" y="760.5" width="82.1" height="44.0" fill="#fff" fill-opacity="0.7"/>
<text font-family="Liberation Sans,Arial,sans-serif" font-size="18.6" fill="#1290a8" text-anchor="middle"><tspan x="965" y="778.6">4.1</tspan><tspan x="965.5" y="799.6">+3.8 ppm</tspan></text>
<path d="M932.8 437.4 L951 443.4 L932.8 449.3 L936.5 443.4 Z" fill="#000"/>
<g stroke="#000" stroke-width="1.5" fill="none"><path d="M770.98 887.75 V903.75"/><path d="M957.46 887.75 V903.75"/><path d="M1143.94 887.75 V903.75"/><path d="M1330.42 887.75 V903.75"/><path d="M1516.90 887.75 V903.75"/><path d="M1703.38 887.75 V903.75"/><path d="M1889.86 887.75 V903.75"/></g>
<text transform="translate(545.4 900.5) scale(0.925 1)" text-anchor="middle" font-family="Liberation Sans,Arial,sans-serif" font-size="21.4" fill="#000">0</text>
<text transform="translate(545.4 790.9) scale(0.925 1)" text-anchor="middle" font-family="Liberation Sans,Arial,sans-serif" font-size="21.4" fill="#000">20</text>
<text transform="translate(545.4 681.2) scale(0.925 1)" text-anchor="middle" font-family="Liberation Sans,Arial,sans-serif" font-size="21.4" fill="#000">40</text>
<text transform="translate(545.4 571.6) scale(0.925 1)" text-anchor="middle" font-family="Liberation Sans,Arial,sans-serif" font-size="21.4" fill="#000">60</text>
<text transform="translate(545.4 461.9) scale(0.925 1)" text-anchor="middle" font-family="Liberation Sans,Arial,sans-serif" font-size="21.4" fill="#000">80</text>
<text transform="translate(545.4 352.2) scale(0.925 1)" text-anchor="middle" font-family="Liberation Sans,Arial,sans-serif" font-size="21.4" fill="#000">100</text>
<text transform="translate(545.4 242.6) scale(0.925 1)" text-anchor="middle" font-family="Liberation Sans,Arial,sans-serif" font-size="21.4" fill="#000">120</text>
<text transform="translate(584.1 930.8) scale(0.925 1)" text-anchor="middle" font-family="Liberation Sans,Arial,sans-serif" font-size="21.4" fill="#000">0</text>
<text transform="translate(770.6 930.8) scale(0.925 1)" text-anchor="middle" font-family="Liberation Sans,Arial,sans-serif" font-size="21.4" fill="#000">2</text>
<text transform="translate(957.1 930.8) scale(0.925 1)" text-anchor="middle" font-family="Liberation Sans,Arial,sans-serif" font-size="21.4" fill="#000">4</text>
<text transform="translate(1143.5 930.8) scale(0.925 1)" text-anchor="middle" font-family="Liberation Sans,Arial,sans-serif" font-size="21.4" fill="#000">6</text>
<text transform="translate(1330.0 930.8) scale(0.925 1)" text-anchor="middle" font-family="Liberation Sans,Arial,sans-serif" font-size="21.4" fill="#000">8</text>
<text transform="translate(1516.5 930.8) scale(0.925 1)" text-anchor="middle" font-family="Liberation Sans,Arial,sans-serif" font-size="21.4" fill="#000">10</text>
<text transform="translate(1703.0 930.8) scale(0.925 1)" text-anchor="middle" font-family="Liberation Sans,Arial,sans-serif" font-size="21.4" fill="#000">12</text>
<text transform="translate(1889.5 930.8) scale(0.925 1)" text-anchor="middle" font-family="Liberation Sans,Arial,sans-serif" font-size="21.4" fill="#000">14</text>
<text transform="translate(1236.2 965.6) scale(1.085 1)" text-anchor="middle" font-family="Liberation Sans,Arial,sans-serif" font-size="20.2" font-weight="bold" fill="#000">Retention Time</text>
<text transform="translate(506.6 564.8) rotate(-90) scale(1.085 1)" text-anchor="middle" font-family="Liberation Sans,Arial,sans-serif" font-size="19.9" font-weight="bold" fill="#000">Intensity</text>
</svg>
</div>
<div id="botline"></div>
<div id="status"><span style="left:6px;font-size:16.6px;letter-spacing:-0.1px">Ready</span><span style="left:1593px;font-size:18.3px">4/5 prot</span><span style="left:1667px;font-size:18.3px">4/5 pep</span><span style="left:1737px;font-size:18.3px">4/5 prec</span><span style="left:1812.5px;font-size:18.3px">11/31 tran</span></div>
<div id="lb"></div><div id="rb"></div>
</div>
</body></html>
